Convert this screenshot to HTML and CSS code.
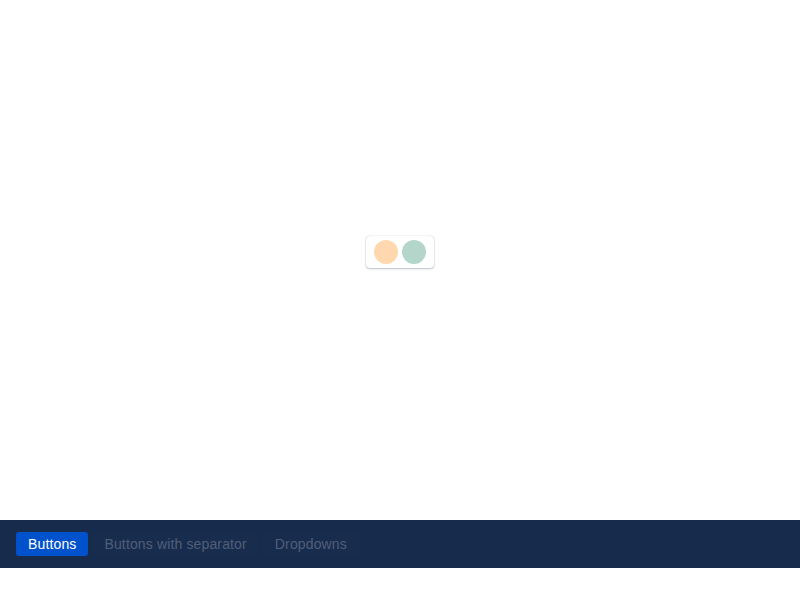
FILE: index.html
```html
<!DOCTYPE html>
<html>
<head>
<meta charset="utf-8">
<link rel="stylesheet" href="styles.css">
</head>
<body>
<div class="stage">
  <div class="card">
    <span class="dot dot-peach"></span>
    <span class="dot dot-teal"></span>
  </div>
</div>
<nav class="bar">
  <button class="tab tab-active">Buttons</button>
  <button class="tab">Buttons with separator</button>
  <button class="tab">Dropdowns</button>
</nav>
</body>
</html>
```
FILE: styles.css
```css
html, body {
  margin: 0;
  padding: 0;
  background: #ffffff;
  font-family: "Liberation Sans", Arial, sans-serif;
}
.stage {
  height: 504px;
  padding-bottom: 16px;
  display: flex;
  align-items: center;
  justify-content: center;
}
.card {
  display: flex;
  gap: 4px;
  padding: 4px 8px;
  background: #fff;
  border-radius: 4px;
  box-shadow: 0 1px 2px rgba(9, 30, 66, 0.25), 0 0 1px rgba(9, 30, 66, 0.31);
}
.dot {
  width: 24px;
  height: 24px;
  border-radius: 50%;
  display: block;
}
.dot-peach { background: #ffd8b0; }
.dot-teal { background: #b4d5ca; }
.bar {
  height: 48px;
  background: #172b4d;
  display: flex;
  align-items: center;
  gap: 4px;
  padding: 0 16px;
}
.tab {
  height: 24px;
  padding: 0 12px;
  border: none;
  border-radius: 3px;
  background: #182c4e;
  color: #505f79;
  font-family: "Liberation Sans", Arial, sans-serif;
  font-size: 14px;
  letter-spacing: 0.14px;
  line-height: 24px;
  cursor: pointer;
}
.tab-active {
  background: #0052cc;
  color: #ffffff;
}
```
